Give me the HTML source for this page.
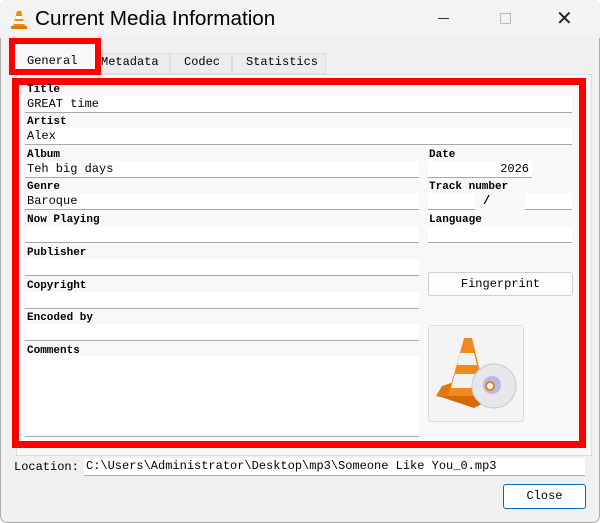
<!DOCTYPE html><html><head><style>
body{margin:0;width:600px;height:523px;background:#fff;font-family:"Liberation Mono","Noto Sans CJK SC",monospace;font-size:12px;color:#000;position:relative;overflow:hidden}
.a{position:absolute}
.win{left:0;top:0;width:598px;height:521px;border:1px solid #aaa;border-radius:7px;background:#f0f0f0}
.f{position:absolute;background:#fff;border-bottom:1px solid #a8a8a8;height:17px;line-height:17px;padding-left:2px;box-sizing:border-box}
.l{position:absolute;font-weight:bold;font-size:11px}
.btn{position:absolute;background:#fdfdfd;border:1px solid #d0d0d0;border-radius:3px;text-align:center;box-sizing:border-box}
</style></head><body>
<div class="a win"></div>
<div class="a" style="left:0;top:0;width:600px;height:38px;background:#f3f3f3;border-radius:7px 7px 0 0"></div>
<svg class="a" style="left:10px;top:10px" width="18" height="20" viewBox="0 0 18 20"><path d="M7 1h4l4 15H3z" fill="#f08a10"/><path d="M6 6h6l1 3H5zM4.5 11h9l.8 3H3.7z" fill="#fff"/><rect x="1" y="16" width="16" height="3" fill="#e07808"/></svg>
<div class="a" style="left:35px;top:7px;font-family:'Liberation Sans',sans-serif;font-size:20.7px">Current Media Information</div>
<div class="a" style="left:438px;top:18px;width:11px;height:1px;background:#333"></div>
<div class="a" style="left:500px;top:13px;width:9px;height:9px;border:1px solid #bbb"></div>
<div class="a" style="left:556px;top:6px;font-family:'Liberation Sans',sans-serif;font-size:20px;color:#222">✕</div>
<div class="a" style="left:98px;top:53px;width:70px;height:19px;background:#ececec;border:1px solid #ddd"></div>
<div class="a" style="left:170px;top:53px;width:60px;height:19px;background:#ececec;border:1px solid #ddd"></div>
<div class="a" style="left:232px;top:53px;width:92px;height:19px;background:#ececec;border:1px solid #ddd"></div>
<div class="a" style="left:101px;top:55px">Metadata</div>
<div class="a" style="left:184px;top:55px">Codec</div>
<div class="a" style="left:246px;top:55px">Statistics</div>
<div class="a" style="left:16px;top:74px;width:574px;height:380px;background:#f8f8f8;border:1px solid #ddd"></div>
<div class="a" style="left:9px;top:38px;width:80px;height:25px;border:6px solid #f00;background:#f8f8f8"></div>
<div class="a" style="left:27px;top:54px">General</div>
<div class="a" style="left:12px;top:78px;width:560px;height:356px;border:7px solid #f00"></div>
<div class="l" style="left:27px;top:84px">Title</div><div class="f" style="left:25px;top:96px;width:547px">GREAT time</div>
<div class="l" style="left:27px;top:116px">Artist</div><div class="f" style="left:25px;top:128px;width:547px">Alex</div>
<div class="l" style="left:27px;top:149px">Album</div><div class="f" style="left:25px;top:161px;width:394px">Teh big days</div>
<div class="l" style="left:27px;top:181px">Genre</div><div class="f" style="left:25px;top:193px;width:394px">Baroque</div>
<div class="l" style="left:27px;top:214px">Now Playing</div><div class="f" style="left:25px;top:226px;width:394px"></div>
<div class="l" style="left:27px;top:247px">Publisher</div><div class="f" style="left:25px;top:259px;width:394px"></div>
<div class="l" style="left:27px;top:280px">Copyright</div><div class="f" style="left:25px;top:292px;width:394px"></div>
<div class="l" style="left:27px;top:312px">Encoded by</div><div class="f" style="left:25px;top:324px;width:394px"></div>
<div class="l" style="left:27px;top:345px">Comments</div><div class="f" style="left:25px;top:356px;width:394px;height:81px"></div>
<div class="l" style="left:429px;top:149px">Date</div><div class="f" style="left:428px;top:161px;width:104px;text-align:right;padding-right:3px">2026</div>
<div class="l" style="left:429px;top:181px">Track number</div><div class="f" style="left:428px;top:193px;width:47px"></div><div class="a" style="left:483px;top:194px;font-weight:bold">/</div><div class="f" style="left:525px;top:193px;width:47px"></div>
<div class="l" style="left:429px;top:214px">Language</div><div class="f" style="left:428px;top:226px;width:144px"></div>
<div class="btn" style="left:428px;top:272px;width:145px;height:24px;line-height:22px">Fingerprint</div>
<div class="btn" style="left:428px;top:325px;width:96px;height:97px;background:#f4f4f4;border-color:#ddd"></div>
<svg class="a" style="left:430px;top:328px" width="92" height="92" viewBox="0 0 92 92"><path d="M24 72 L6 68 L12 58 L30 52z" fill="#e07a10"/><path d="M34 10h8l14 58H18z" fill="#f08a20"/><path d="M30 25h14l3 12H27zM25 46h24l4 14H21z" fill="#f2f2f2"/><path d="M8 68L44 80 60 72 56 68H18z" fill="#d86a08"/><circle cx="64" cy="58" r="22" fill="#e6e6ec" stroke="#c8c8d0"/><circle cx="62" cy="57" r="9" fill="#b8b8e0"/><circle cx="60" cy="58" r="4" fill="#fff" stroke="#e08020" stroke-width="2"/></svg>
<div class="a" style="left:14px;top:460px">Location:</div>
<div class="f" style="left:84px;top:458px;width:501px;height:18px">C:\Users\Administrator\Desktop\mp3\Someone Like You_0.mp3</div>
<div class="btn" style="left:503px;top:484px;width:83px;height:25px;line-height:23px;border-color:#0067c0;background:#fdfdfd">Close</div>
</body></html>
